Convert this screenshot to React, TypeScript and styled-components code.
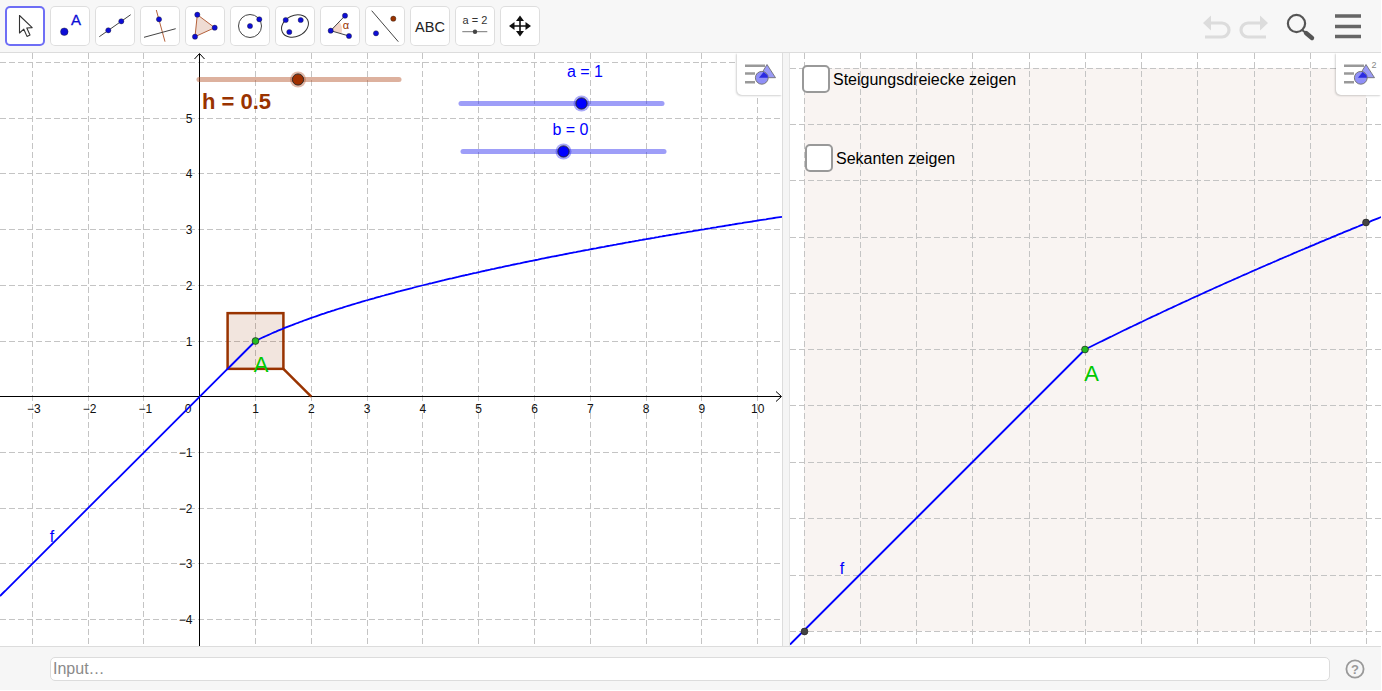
import React from 'react'
import styled, { createGlobalStyle } from 'styled-components';

const GlobalStyle = createGlobalStyle`
	html, body {
		margin: 0;
		padding: 0;
		background: #fff;
		font-family: "Liberation Sans", Arial, sans-serif;
	}
`;

const App_ = styled.div`
	width: 1381px;
	height: 690px;
	display: flex;
	flex-direction: column;
	overflow: hidden;
`;

const Toolbar = styled.div`
	height: 52px;
	flex: none;
	display: flex;
	align-items: flex-start;
	justify-content: space-between;
	background: #f7f7f7;
	border-bottom: 1px solid #dcdcdc;
`;

const ToolGroup = styled.div`
	display: flex;
	gap: 5px;
	padding: 6px 0 0 5px;
`;

const ToolButton = styled.div<{ $active?: boolean }>`
	width: 40px;
	height: 40px;
	box-sizing: border-box;
	position: relative;
	background: #fff;
	border-radius: 5px;
	box-shadow: inset 0 0 0 ${p => (p.$active ? '2px #6e6ef5' : '1px #dedede')};

	svg {
		display: block;
	}
`;

const TopRight = styled.svg`
	width: 180px;
	height: 52px;
	flex: none;
`;

const Main = styled.div`
	flex: 1;
	display: flex;
	min-height: 0;
`;

const GraphPanel = styled.div<{ $width: number }>`
	position: relative;
	width: ${p => p.$width}px;
	flex: none;
	overflow: hidden;
	background: #fff;

	> svg {
		display: block;
	}
`;

const Divider = styled.div`
	width: 8px;
	flex: none;
	box-sizing: border-box;
	background: #f5f5f5;
	border-left: 1px solid #dcdcdc;
	border-right: 1px solid #e4e4e4;
`;

const SettingsTab = styled.div`
	position: absolute;
	top: 0;
	right: 0;
	width: 45px;
	height: 42px;
	background: #fff;
	border-bottom-left-radius: 5px;
	box-shadow: -1px 1px 2px rgba(0, 0, 0, 0.18);
`;

const CheckRow = styled.label<{ $x: number; $y: number }>`
	position: absolute;
	left: ${p => p.$x}px;
	top: ${p => p.$y}px;
	display: flex;
	align-items: center;
	gap: 3px;
	font-size: 16px;
	line-height: 18px;
	color: #000;

	> span:last-child {
		padding-top: 2px;
	}
`;

const CheckBox = styled.span`
	width: 28px;
	height: 28px;
	box-sizing: border-box;
	background: #fff;
	border: 2px solid #999;
	border-radius: 5px;
`;

const InputBar = styled.div`
	height: 43px;
	flex: none;
	display: flex;
	align-items: center;
	padding: 0 16px 0 50px;
	gap: 15px;
	background: #f6f6f6;
	border-top: 1px solid #dcdcdc;
`;

const InputBox = styled.div`
	flex: 1;
	height: 24px;
	box-sizing: border-box;
	display: flex;
	align-items: center;
	padding-left: 2px;
	background: #fff;
	border: 1px solid #dcdcdc;
	border-radius: 5px;
	font-size: 16px;
	color: #8a8a8a;
`;

const HelpIcon = styled.svg`
	width: 20px;
	height: 20px;
	flex: none;
`;

const BLUE = '#0d0dd6';
const CURVE = '#0000ff';
const BROWN = '#993300';
const GREEN = '#00c800';

const Dot = ({ x, y, fill = BLUE }: { x: number; y: number; fill?: string }) => (
	<circle cx={x} cy={y} r={2.6} fill={fill} stroke="#222" strokeWidth={0.4} />
);

const Icon = ({ children }: { children: React.ReactNode }) => (
	<svg width={40} height={40} viewBox="0 0 40 40">{children}</svg>
);

const icons: React.ReactNode[] = [
	<Icon>
		<path d="M14.5 9.5 L14.5 27 L18.8 23.2 L22 30.4 L25 29 L21.8 22 L27.2 21.6 Z" fill="#fff" stroke="#333" strokeWidth={1.1} strokeLinejoin="round" />
	</Icon>,
	<Icon>
		<circle cx={14.3} cy={25.7} r={3.8} fill={BLUE} stroke="#222" strokeWidth={0.4} />
		<text x={26} y={19.3} fontSize={15} fill={BLUE} stroke={BLUE} strokeWidth={0.3} textAnchor="middle">A</text>
	</Icon>,
	<Icon>
		<line x1={4.3} y1={30.7} x2={35.7} y2={8.7} stroke="#444" strokeWidth={1} />
		<Dot x={13.3} y={24.3} />
		<Dot x={26.3} y={15.3} />
	</Icon>,
	<Icon>
		<line x1={16.3} y1={4} x2={25} y2={35.7} stroke="#b5623c" strokeWidth={1} />
		<line x1={4} y1={31.3} x2={35.7} y2={22.7} stroke="#444" strokeWidth={1} />
		<Dot x={19} y={13.3} />
	</Icon>,
	<Icon>
		<polygon points="12.3,8.7 29.7,21.7 10,30.7" fill="#efdcd3" stroke="#b5623c" strokeWidth={1} />
		<Dot x={12.3} y={8.7} />
		<Dot x={29.7} y={21.7} />
		<Dot x={10} y={30.7} />
	</Icon>,
	<Icon>
		<circle cx={20} cy={20} r={11.5} fill="none" stroke="#444" strokeWidth={1} />
		<Dot x={20} y={20} />
		<Dot x={29.3} y={13.3} />
	</Icon>,
	<Icon>
		<ellipse cx={20} cy={20} rx={14} ry={10.5} transform="rotate(-25 20 20)" fill="none" stroke="#333" strokeWidth={1} />
		<Dot x={10.7} y={14} />
		<Dot x={25.7} y={14} />
		<Dot x={14.3} y={26} />
	</Icon>,
	<Icon>
		<path d="M10.7 24.7 L19 15.5 A 13 13 0 0 1 21.5 27.5 Z" fill="#f3d5c8" />
		<polyline points="25,9.7 10.7,24.7 29,30" fill="none" stroke="#444" strokeWidth={1} />
		<Dot x={10.7} y={24.7} />
		<Dot x={25} y={9.7} />
		<Dot x={29} y={30} />
		<text x={26} y={22.5} fontSize={11} fill={BROWN} textAnchor="middle">α</text>
	</Icon>,
	<Icon>
		<line x1={6.7} y1={4.7} x2={33.3} y2={35.7} stroke="#444" strokeWidth={1} />
		<Dot x={28.3} y={12.7} fill={BROWN} />
		<Dot x={11} y={27.3} />
	</Icon>,
	<Icon>
		<text x={20} y={25.5} fontSize={14.5} fill="#222" textAnchor="middle">ABC</text>
	</Icon>,
	<Icon>
		<text x={20} y={18} fontSize={11} fill="#333" textAnchor="middle">a = 2</text>
		<line x1={7.3} y1={25.7} x2={32.3} y2={25.7} stroke="#777" strokeWidth={1} />
		<circle cx={20} cy={25.7} r={2.2} fill="#444" />
	</Icon>,
	<Icon>
		<path d="M20 12 V28 M12 20 H28" stroke="#111" strokeWidth={1.6} />
		<path d="M20 9.5 L24 15 H16 Z M20 30.5 L24 25 H16 Z M9 20 L14.5 16 V24 Z M31 20 L25.5 16 V24 Z" fill="#111" />
	</Icon>,
];

const SettingsGlyph = ({ squared }: { squared?: boolean }) => (
	<svg width={45} height={42} viewBox="0 0 45 42">
		<path d="M8 12.7 H28 M8 20.5 H18 M8 29.3 H18" stroke="#999" strokeWidth={2.4} />
		<polygon points="30,11.5 38.5,24.7 22,24.7" fill="#9a9af5" stroke="#666" strokeWidth={0.8} />
		<circle cx={24.8} cy={24.8} r={6.4} fill="#8f8ff7" stroke="#777" strokeWidth={1} />
		<path d="M22 24.7 L26.6 18.9 L30.4 22 L31 24.7 Z" fill="#2a2ae0" />
		{squared && <text x={35.5} y={15} fontSize={9} fill="#888">2</text>}
	</svg>
);

const GRID = '#c4c4c4';
const DASH = '6 3';

const Slider = ({ x1, x2, y, knob, color, fill }: { x1: number; x2: number; y: number; knob: number; color: string; fill: string }) => (
	<g>
		<line x1={x1 + 2} x2={x2 - 2} y1={y} y2={y} stroke={color} strokeWidth={5} strokeLinecap="round" opacity={0.45} />
		<circle cx={knob} cy={y} r={8} fill={color} opacity={0.4} />
		<circle cx={knob} cy={y} r={5.6} fill={fill} stroke="#222" strokeWidth={0.9} />
	</g>
);

const f = (t: number) => (t < 1 ? t : Math.sqrt(t));

const curvePath = (x0: number, x1: number, toX: (t: number) => number, fromX: (x: number) => number, toY: (v: number) => number) => {
	const pts: string[] = [];
	for (let x = x0; x <= x1; x += 2) {
		pts.push(`${x.toFixed(1)},${toY(f(fromX(x))).toFixed(1)}`);
	}
	const kink = toX(1);
	if (kink > x0 && kink < x1) {
		const i = pts.findIndex(p => parseFloat(p) > kink);
		pts.splice(i, 0, `${kink.toFixed(1)},${toY(1).toFixed(1)}`);
	}
	return 'M' + pts.join(' L');
};

const OX = 199.7;
const OY = 396.7;
const SX = 55.8;
const SY = 55.7;
const sx = (t: number) => OX + t * SX;
const sy = (v: number) => OY - v * SY;
// grid lines sit on whole pixels, so they stay crisp
const snap = (v: number) => Math.floor(v) + 0.5;

const xUnits = [-3, -2, -1, 1, 2, 3, 4, 5, 6, 7, 8, 9, 10];
const yUnits = [-4, -3, -2, -1, 1, 2, 3, 4, 5];

const LeftGraph = () => (
	<svg width={782} height={593} viewBox="0 53 782 593" fontFamily="Liberation Sans, Arial, sans-serif">
		<g stroke={GRID} strokeWidth={1} strokeDasharray={DASH}>
			{xUnits.map(u => <line key={u} x1={snap(sx(u))} x2={snap(sx(u))} y1={53} y2={646} />)}
			{[...yUnits, 6].map(u => <line key={u} x1={0} x2={782} y1={snap(sy(u))} y2={snap(sy(u))} />)}
		</g>
		<line x1={0} x2={781} y1={396.5} y2={396.5} stroke="#000" strokeWidth={1} />
		<line x1={199.5} x2={199.5} y1={54} y2={646} stroke="#000" strokeWidth={1} />
		<path d="M776 391.5 L781.5 396.5 L776 401.5" fill="none" stroke="#000" strokeWidth={1} />
		<path d="M194.5 59 L199.5 53.5 L204.5 59" fill="none" stroke="#000" strokeWidth={1} />

		<g fontSize={12} fill="#111">
			{xUnits.map(u => (
				<text key={u} x={sx(u) + (u < 0 ? 1.5 : 0)} y={412.5} textAnchor="middle">{u < 0 ? `−${-u}` : u}</text>
			))}
			{yUnits.map(u => (
				<text key={u} x={192.5} y={sy(u) + 4.5} textAnchor="end">{u < 0 ? `−${-u}` : u}</text>
			))}
			<text x={188} y={412.5} textAnchor="middle">0</text>
		</g>

		<rect x={sx(0.5)} y={sy(1.5)} width={SX} height={SY} fill="#993300" fillOpacity={0.13} stroke={BROWN} strokeWidth={2.5} />
		<line x1={sx(1.5)} y1={sy(0.5)} x2={sx(2)} y2={OY} stroke={BROWN} strokeWidth={2.5} />
		<path d={curvePath(0, 782, sx, x => (x - OX) / SX, sy)} fill="none" stroke={CURVE} strokeWidth={1.8} />
		<circle cx={sx(1)} cy={sy(1)} r={3.4} fill="#22bb22" stroke="#222" strokeWidth={0.7} />
		<text x={261} y={372} fontSize={22} fill={GREEN} textAnchor="middle">A</text>
		<text x={52} y={542} fontSize={16} fill={CURVE} textAnchor="middle">f</text>

		<Slider x1={197} x2={401} y={79.5} knob={298} color="#b5532a" fill="#a03000" />
		<text x={202} y={109} fontSize={22} fontWeight={700} fill={BROWN}>h = 0.5</text>
		<Slider x1={459} x2={664} y={103.5} knob={581.5} color="#2a2af0" fill={CURVE} />
		<text x={585} y={77} fontSize={16} fill={CURVE} textAnchor="middle">a = 1</text>
		<Slider x1={461} x2={666} y={151.5} knob={563.5} color="#2a2af0" fill={CURVE} />
		<text x={570.5} y={135} fontSize={16} fill={CURVE} textAnchor="middle">b = 0</text>
	</svg>
);

const ZX = 1085;
const ZY = 349.5;
const ZS = 562;
const zx = (t: number) => ZX + (t - 1) * ZS;
const zy = (v: number) => ZY - (v - 1) * ZS;

const zoomCols = [804, 860, 916, 972, 1029, 1085, 1141, 1197, 1254, 1310, 1366];
const zoomRows = [68, 124, 180, 237, 293, 349, 405, 462, 518, 575, 631];

const RightGraph = () => (
	<svg width={591} height={593} viewBox="790 53 591 593" fontFamily="Liberation Sans, Arial, sans-serif">
		<rect x={804} y={68} width={562} height={563} fill="#f9f4f2" />
		<g stroke={GRID} strokeWidth={1} strokeDasharray={DASH}>
			{zoomCols.map(x => <line key={x} x1={x + 0.5} x2={x + 0.5} y1={53} y2={646} />)}
			{zoomRows.map(y => <line key={y} x1={790} x2={1381} y1={y + 0.5} y2={y + 0.5} />)}
		</g>
		<path d={curvePath(790, 1382, zx, x => (x - ZX) / ZS + 1, zy)} fill="none" stroke={CURVE} strokeWidth={1.8} />
		<circle cx={804.5} cy={631.5} r={3.4} fill="#444" stroke="#222" strokeWidth={0.7} />
		<circle cx={1366} cy={222.5} r={3.4} fill="#444" stroke="#222" strokeWidth={0.7} />
		<circle cx={1085} cy={349.5} r={3.4} fill="#22bb22" stroke="#222" strokeWidth={0.7} />
		<text x={1091.5} y={381} fontSize={22} fill={GREEN} textAnchor="middle">A</text>
		<text x={842} y={574} fontSize={16} fill={CURVE} textAnchor="middle">f</text>
	</svg>
);

const App = () => {
	return (
		<App_>
			<GlobalStyle />
			<Toolbar>
				<ToolGroup>
					{icons.map((icon, i) => (
						<ToolButton key={i} $active={i === 0}>{icon}</ToolButton>
					))}
				</ToolGroup>
				<TopRight viewBox="1201 0 180 52">
					<g fill="none" stroke="#dcdcdc" strokeWidth={3.2}>
						<path d="M1208 23 H1222 a7 7 0 0 1 0 14 H1205" />
						<path d="M1262 23 H1248 a7 7 0 0 0 0 14 H1266" />
					</g>
					<path d="M1203 23 L1211 15.5 V30.5 Z M1268 23 L1260 15.5 V30.5 Z" fill="#dcdcdc" />
					<circle cx={1296.5} cy={23.5} r={8.6} fill="none" stroke="#555" strokeWidth={2.2} />
					<line x1={1302} y1={30} x2={1306} y2={33} stroke="#555" strokeWidth={2} />
					<line x1={1306} y1={33} x2={1312} y2={38} stroke="#555" strokeWidth={4.4} strokeLinecap="round" />
					<path d="M1335 16 H1361 M1335 26.5 H1361 M1335 36.5 H1361" stroke="#666" strokeWidth={3.4} />
				</TopRight>
			</Toolbar>
			<Main>
				<GraphPanel $width={782}>
					<LeftGraph />
					<SettingsTab><SettingsGlyph /></SettingsTab>
				</GraphPanel>
				<Divider />
				<GraphPanel $width={591}>
					<RightGraph />
					<CheckRow $x={12} $y={12}><CheckBox /><span>Steigungsdreiecke zeigen</span></CheckRow>
					<CheckRow $x={15} $y={91}><CheckBox /><span>Sekanten zeigen</span></CheckRow>
					<SettingsTab><SettingsGlyph squared /></SettingsTab>
				</GraphPanel>
			</Main>
			<InputBar>
				<InputBox>Input…</InputBox>
				<HelpIcon viewBox="0 0 20 20">
					<circle cx={10} cy={10} r={8.6} fill="none" stroke="#999" strokeWidth={1.8} />
					<text x={10} y={14.5} fontSize={13} fontWeight={700} fill="#999" textAnchor="middle">?</text>
				</HelpIcon>
			</InputBar>
		</App_>
	)
}

export default App
